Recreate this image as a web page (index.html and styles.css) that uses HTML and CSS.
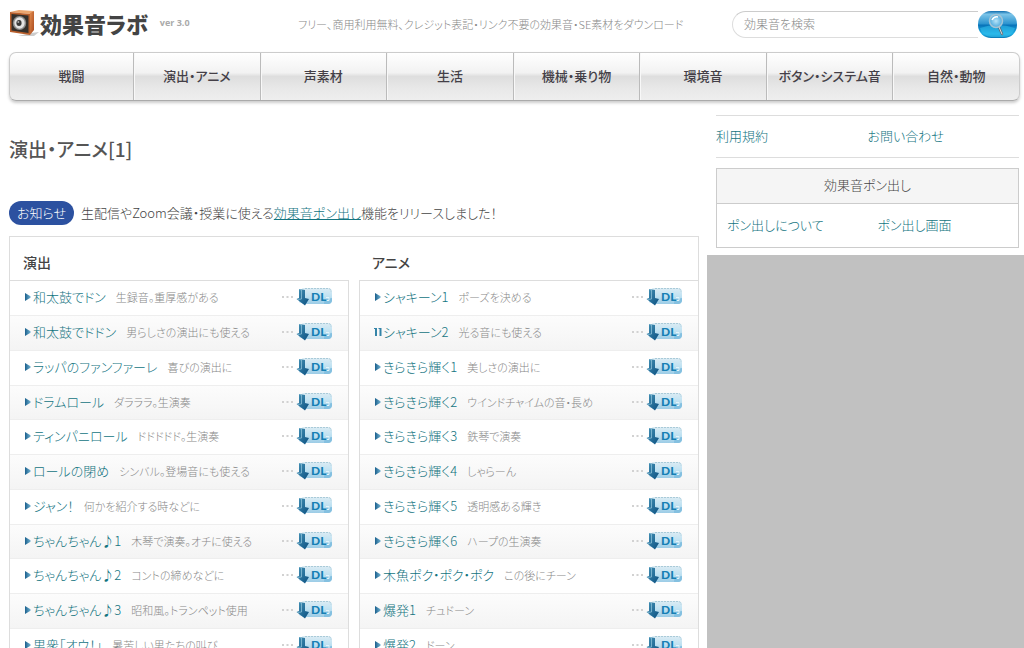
FILE: index.html
```html
<!DOCTYPE html>
<html lang="ja">
<head>
<meta charset="utf-8">
<title>演出・アニメ[1]｜効果音ラボ</title>
<link rel="stylesheet" href="styles.css">
</head>
<body>
<svg class="defs" width="0" height="0" aria-hidden="true">
  <defs>
    <linearGradient id="wood" x1="0" y1="0" x2="1" y2="1"><stop offset="0" stop-color="#e08a4e"/><stop offset="1" stop-color="#a8481c"/></linearGradient>
    <linearGradient id="dlbg" x1="0" y1="0" x2="0" y2="1"><stop offset="0" stop-color="#dcecf4"/><stop offset=".5" stop-color="#c0e2f2"/><stop offset="1" stop-color="#9ccce6"/></linearGradient>
    <linearGradient id="arrow" x1="0" y1="0" x2="1" y2="1"><stop offset="0" stop-color="#4795b8"/><stop offset="1" stop-color="#0b4f80"/></linearGradient>
    <linearGradient id="tri" x1="0" y1="0" x2="1" y2="0"><stop offset="0" stop-color="#1b5f8c"/><stop offset="1" stop-color="#6fb0d0"/></linearGradient>
    <linearGradient id="pill" x1="0" y1="0" x2="0" y2="1"><stop offset="0" stop-color="#0e6cae"/><stop offset=".12" stop-color="#7cc4e8"/><stop offset=".48" stop-color="#2b93cf"/><stop offset=".52" stop-color="#0872b8"/><stop offset=".85" stop-color="#1fb0e6"/><stop offset="1" stop-color="#0a78b4"/></linearGradient>
    <radialGradient id="lens"><stop offset="0" stop-color="#b8e4f8"/><stop offset="1" stop-color="#4aa8dc"/></radialGradient>
  </defs>
  <symbol id="play" viewBox="0 0 8 10"><path d="M1 1l5.500 3.200v1.600L1 9z" fill="url(#tri)"/></symbol>
  <symbol id="pause" viewBox="0 0 8 10"><path d="M0 1h3v8H1V2H0zM4.500 1h3v8h-2V2h-1z" fill="#3484a8"/></symbol>
  <symbol id="dl" viewBox="0 0 54 22">
    <path d="M2 10h2v2H2zM6.500 10h2v2h-2zM11 10h2v2h-2z" fill="#d2d2d2"/>
    <path d="M22 3q0-1 1-1h25q4 0 4 4v8q0 4-4 4H24l-5-2z" fill="url(#dlbg)"/>
    <path d="M25 2.500h23q3 0 3 3" fill="none" stroke="#a9cad8" stroke-dasharray="2 1"/>
    <path d="M44 18q-1-5 8-6v3q-1 3-4 3z" fill="#84c0e0"/>
    <path d="M46 11.500h3v3h-3" fill="none" stroke="#e4f4fa"/>
    <path d="M19 3l6 1v8l4 1-4 6.500L16.500 13l2.500-1z" fill="url(#arrow)"/>
    <path d="M19.500 3.500l2 .5v9l-4 .5" fill="none" stroke="#8cc0d8" stroke-width=".8"/>
    <text x="31" y="15" class="dl-text">DL</text>
  </symbol>
</svg>

<div class="page">
  <header class="header">
    <a class="logo" href="#">
      <svg class="logo-icon" viewBox="0 0 30 28" aria-hidden="true">
        <path d="M22 24l8-1-5 4H9z" fill="#ccc"/>
        <path d="M1 3l9-2 15 1-4 3z" fill="#eba56e"/>
        <path d="M21 4l4-2v19l-4 5z" fill="url(#wood)"/>
        <path d="M1 3l20 2v21L1 23z" fill="#b85f2c"/>
        <path d="M2.500 5l17 1.500V24l-17-2.500z" fill="#34302c"/>
        <ellipse cx="10.500" cy="14" rx="6.700" ry="7" fill="#8c8c8c"/>
        <ellipse cx="10.500" cy="14" rx="5.200" ry="5.700" fill="#e4e4e4"/>
        <ellipse cx="10" cy="14" rx="2.600" ry="3" fill="#383838"/>
        <circle cx="9.300" cy="13" r="1" fill="#aaa"/>
      </svg>
      <span class="logo-name">効果音ラボ</span>
      <span class="logo-ver">ver 3.0</span>
    </a>
    <p class="tagline">フリー、商用利用無料、クレジット表記・リンク不要の効果音・SE素材をダウンロード</p>
    <form class="search">
      <input class="search-box" type="text" placeholder="効果音を検索" aria-label="効果音を検索">
      <button class="search-btn" type="button" aria-label="検索">
        <svg viewBox="0 0 39 27" aria-hidden="true">
          <rect width="39" height="27" rx="13" fill="url(#pill)"/>
          <path d="M2 17q17-6 35 0-3 9-12 9H13Q4 25 2 17z" fill="#35c4f0" opacity=".5"/>
          <path d="M21 16l3 7" stroke="#5a6c78" stroke-width="2.500" stroke-linecap="round"/>
          <path d="M21 16l3 7" stroke="#d8dde0" stroke-width="1" stroke-linecap="round"/>
          <circle cx="18" cy="10" r="6.500" fill="url(#lens)" stroke="#a4c4d6" stroke-width="1.500"/>
          <path d="M14 9q2-4 6-3" stroke="#fff" fill="none" stroke-width="1.500"/>
        </svg>
      </button>
    </form>
  </header>

  <nav class="nav">
    <a href="#">戦闘</a><a href="#">演出・アニメ</a><a href="#">声素材</a><a href="#">生活</a><a href="#">機械・乗り物</a><a href="#">環境音</a><a href="#">ボタン・システム音</a><a href="#">自然・動物</a>
  </nav>

  <div class="columns">
    <main class="main">
      <h1 class="title">演出・アニメ[1]</h1>
      <p class="notice"><span class="badge">お知らせ</span><span>生配信やZoom会議・授業に使える<a href="#">効果音ポン出し</a>機能をリリースしました！</span></p>
      <div class="sounds">
        <section class="group">
          <h2>演出</h2>
          <ul>
            <li><svg class="mark"><use href="#play"/></svg><a href="#">和太鼓でドン</a><span>生録音。重厚感がある</span><button type="button" aria-label="ダウンロード"><svg><use href="#dl"/></svg></button></li>
            <li><svg class="mark"><use href="#play"/></svg><a href="#">和太鼓でドドン</a><span>男らしさの演出にも使える</span><button type="button" aria-label="ダウンロード"><svg><use href="#dl"/></svg></button></li>
            <li><svg class="mark"><use href="#play"/></svg><a href="#">ラッパのファンファーレ</a><span>喜びの演出に</span><button type="button" aria-label="ダウンロード"><svg><use href="#dl"/></svg></button></li>
            <li><svg class="mark"><use href="#play"/></svg><a href="#">ドラムロール</a><span>ダラララ。生演奏</span><button type="button" aria-label="ダウンロード"><svg><use href="#dl"/></svg></button></li>
            <li><svg class="mark"><use href="#play"/></svg><a href="#">ティンパニロール</a><span>ドドドドド。生演奏</span><button type="button" aria-label="ダウンロード"><svg><use href="#dl"/></svg></button></li>
            <li><svg class="mark"><use href="#play"/></svg><a href="#">ロールの閉め</a><span>シンバル。登場音にも使える</span><button type="button" aria-label="ダウンロード"><svg><use href="#dl"/></svg></button></li>
            <li><svg class="mark"><use href="#play"/></svg><a href="#">ジャン！</a><span>何かを紹介する時などに</span><button type="button" aria-label="ダウンロード"><svg><use href="#dl"/></svg></button></li>
            <li><svg class="mark"><use href="#play"/></svg><a href="#">ちゃんちゃん♪1</a><span>木琴で演奏。オチに使える</span><button type="button" aria-label="ダウンロード"><svg><use href="#dl"/></svg></button></li>
            <li><svg class="mark"><use href="#play"/></svg><a href="#">ちゃんちゃん♪2</a><span>コントの締めなどに</span><button type="button" aria-label="ダウンロード"><svg><use href="#dl"/></svg></button></li>
            <li><svg class="mark"><use href="#play"/></svg><a href="#">ちゃんちゃん♪3</a><span>昭和風。トランペット使用</span><button type="button" aria-label="ダウンロード"><svg><use href="#dl"/></svg></button></li>
            <li><svg class="mark"><use href="#play"/></svg><a href="#">男衆「オウ！」</a><span>暑苦しい男たちの叫び</span><button type="button" aria-label="ダウンロード"><svg><use href="#dl"/></svg></button></li>
          </ul>
        </section>
        <section class="group">
          <h2>アニメ</h2>
          <ul>
            <li><svg class="mark"><use href="#play"/></svg><a href="#">シャキーン1</a><span>ポーズを決める</span><button type="button" aria-label="ダウンロード"><svg><use href="#dl"/></svg></button></li>
            <li><svg class="mark"><use href="#pause"/></svg><a href="#">シャキーン2</a><span>光る音にも使える</span><button type="button" aria-label="ダウンロード"><svg><use href="#dl"/></svg></button></li>
            <li><svg class="mark"><use href="#play"/></svg><a href="#">きらきら輝く1</a><span>美しさの演出に</span><button type="button" aria-label="ダウンロード"><svg><use href="#dl"/></svg></button></li>
            <li><svg class="mark"><use href="#play"/></svg><a href="#">きらきら輝く2</a><span>ウインドチャイムの音・長め</span><button type="button" aria-label="ダウンロード"><svg><use href="#dl"/></svg></button></li>
            <li><svg class="mark"><use href="#play"/></svg><a href="#">きらきら輝く3</a><span>鉄琴で演奏</span><button type="button" aria-label="ダウンロード"><svg><use href="#dl"/></svg></button></li>
            <li><svg class="mark"><use href="#play"/></svg><a href="#">きらきら輝く4</a><span>しゃらーん</span><button type="button" aria-label="ダウンロード"><svg><use href="#dl"/></svg></button></li>
            <li><svg class="mark"><use href="#play"/></svg><a href="#">きらきら輝く5</a><span>透明感ある輝き</span><button type="button" aria-label="ダウンロード"><svg><use href="#dl"/></svg></button></li>
            <li><svg class="mark"><use href="#play"/></svg><a href="#">きらきら輝く6</a><span>ハープの生演奏</span><button type="button" aria-label="ダウンロード"><svg><use href="#dl"/></svg></button></li>
            <li><svg class="mark"><use href="#play"/></svg><a href="#">木魚ポク・ポク・ポク</a><span>この後にチーン</span><button type="button" aria-label="ダウンロード"><svg><use href="#dl"/></svg></button></li>
            <li><svg class="mark"><use href="#play"/></svg><a href="#">爆発1</a><span>チュドーン</span><button type="button" aria-label="ダウンロード"><svg><use href="#dl"/></svg></button></li>
            <li><svg class="mark"><use href="#play"/></svg><a href="#">爆発2</a><span>ドーン</span><button type="button" aria-label="ダウンロード"><svg><use href="#dl"/></svg></button></li>
          </ul>
        </section>
      </div>
    </main>

    <aside class="side">
      <div class="side-links"><a href="#">利用規約</a><a href="#">お問い合わせ</a></div>
      <section class="side-box">
        <h2>効果音ポン出し</h2>
        <div class="side-box-links"><a href="#">ポン出しについて</a><a href="#">ポン出し画面</a></div>
      </section>
      <div class="ad"></div>
    </aside>
  </div>
</div>
</body>
</html>
```
FILE: styles.css
```css
* { box-sizing: border-box; }
body {
  margin: 0;
  background: #fff;
  color: #444;
  font-family: "Noto Sans CJK JP", sans-serif;
  font-size: 13px;
  font-weight: 300;
  line-height: 20px;
  font-feature-settings: "palt";
}
h1, h2, p, ul { margin: 0; padding: 0; }
ul { list-style: none; }
a { color: #13747f; text-decoration: none; }
button { border: 0; padding: 0; background: none; cursor: pointer; }
svg { display: block; }
.defs { position: absolute; }
.page { height: 100vh; display: flex; flex-direction: column; overflow: hidden; padding-left: 9px; }

.header { display: flex; align-items: center; height: 52px; padding-right: 7px; padding-bottom: 4px; }
.logo { display: flex; align-items: center; width: 289px; padding-bottom: 2px; }
.logo-icon { width: 30px; height: 28px; }
.logo-name { margin-left: 1px; color: #444; font-size: 22px; font-weight: 900; line-height: 32px; }
.logo-ver { margin-left: 12px; color: #aaa; font-family: "Open Sans", sans-serif; font-size: 9px; font-weight: 700; }
.tagline { flex: 1; color: #888; font-size: 11px; white-space: nowrap; }
.search { display: flex; width: 285px; height: 27px; }
.search-box {
  flex: 1; min-width: 0; padding: 0 11px;
  border: 1px solid #ddd; border-top-color: #ccc; border-right: 0; border-radius: 14px 0 0 14px;
  background: #fff; font: inherit; font-size: 12px; outline: 0;
}
.search-box::placeholder { color: #888; opacity: 1; }
.search-btn { width: 39px; height: 27px; }
.search-btn svg { width: 39px; height: 27px; }

.nav {
  display: flex; flex: none; height: 49px; margin-right: 4px;
  border: 1px solid #ccc; border-bottom-color: #aaa; border-radius: 7px;
  background: linear-gradient(#fff 0%, #f2f2f2 42%, #dedede 50%, #e8e8e8 75%, #eee 100%);
  box-shadow: 0 2px 3px #ccc;
}
.nav a {
  flex: 1; color: #443f47; font-weight: 500; line-height: 46px; text-align: center; white-space: nowrap;
  border-left: 1px solid #bbb; box-shadow: inset 1px 0 #f8f8f8;
}
.nav a:first-child { flex: 0 0 123px; border-left: 0; box-shadow: none; }

.columns { display: flex; flex: 1; min-height: 0; }
.main { flex: 1; min-width: 0; padding-right: 8px; }
.title { padding-top: 34px; color: #555; font-size: 19px; font-weight: 500; line-height: 28px; }
.notice { display: flex; align-items: center; gap: 7px; margin-top: 38px; height: 25px; padding-bottom: 1px; white-space: nowrap; }
.notice a { text-decoration: underline; }
.badge { padding: 0 8px; border-radius: 12px; background: #2c51a0; color: #fff; font-size: 13px; line-height: 24px; }

.sounds { display: flex; gap: 10px; margin-top: 10px; border: 1px solid #ddd; border-bottom: 0; }
.group { flex: 1; min-width: 0; }
.group h2 { height: 43px; padding: 15px 0 0 13px; color: #444; font-size: 14px; font-weight: 500; line-height: 20px; }
.group ul { border-top: 1px solid #ddd; }
.group:first-child ul { border-right: 1px solid #ddd; }
.group:last-child ul { border-left: 1px solid #ddd; }
.group li {
  display: flex; align-items: center; height: 35px; padding: 0 14px 2px;
  border-bottom: 1px solid #eee; white-space: nowrap;
}
.group li:nth-child(even) { background: linear-gradient(#fcfcfc, #f4f4f4); }
.group li:nth-child(4n) { height: 34px; }
.mark { width: 8px; height: 10px; margin-right: 1px; }
.group li span { margin-left: 10px; color: #888; font-size: 11px; }
.group li button { margin-left: auto; }
.group li button svg { width: 54px; height: 22px; }
.dl-text { font-family: Lato, sans-serif; font-size: 12px; font-weight: 900; fill: #167fb4; }

.side { display: flex; flex-direction: column; width: 317px; padding-top: 14px; }
.side-links, .side-box { margin: 0 5px 0 9px; }
.side-links { display: grid; grid-template-columns: 1fr 1fr; height: 43px; border: solid #ddd; border-width: 1px 0; line-height: 40px; }
.side-box { margin-top: 10px; border: 1px solid #ccc; }
.side-box h2 { height: 35px; border-bottom: 1px solid #ccc; background: #f5f5f5; font-size: 13px; font-weight: 300; line-height: 32px; text-align: center; }
.side-box-links { display: grid; grid-template-columns: 1fr 1fr; padding: 0 0 2px 10px; column-gap: 10px; line-height: 41px; }
.ad { flex: 1; margin-top: 7px; background: #c1c1c1; }
```
